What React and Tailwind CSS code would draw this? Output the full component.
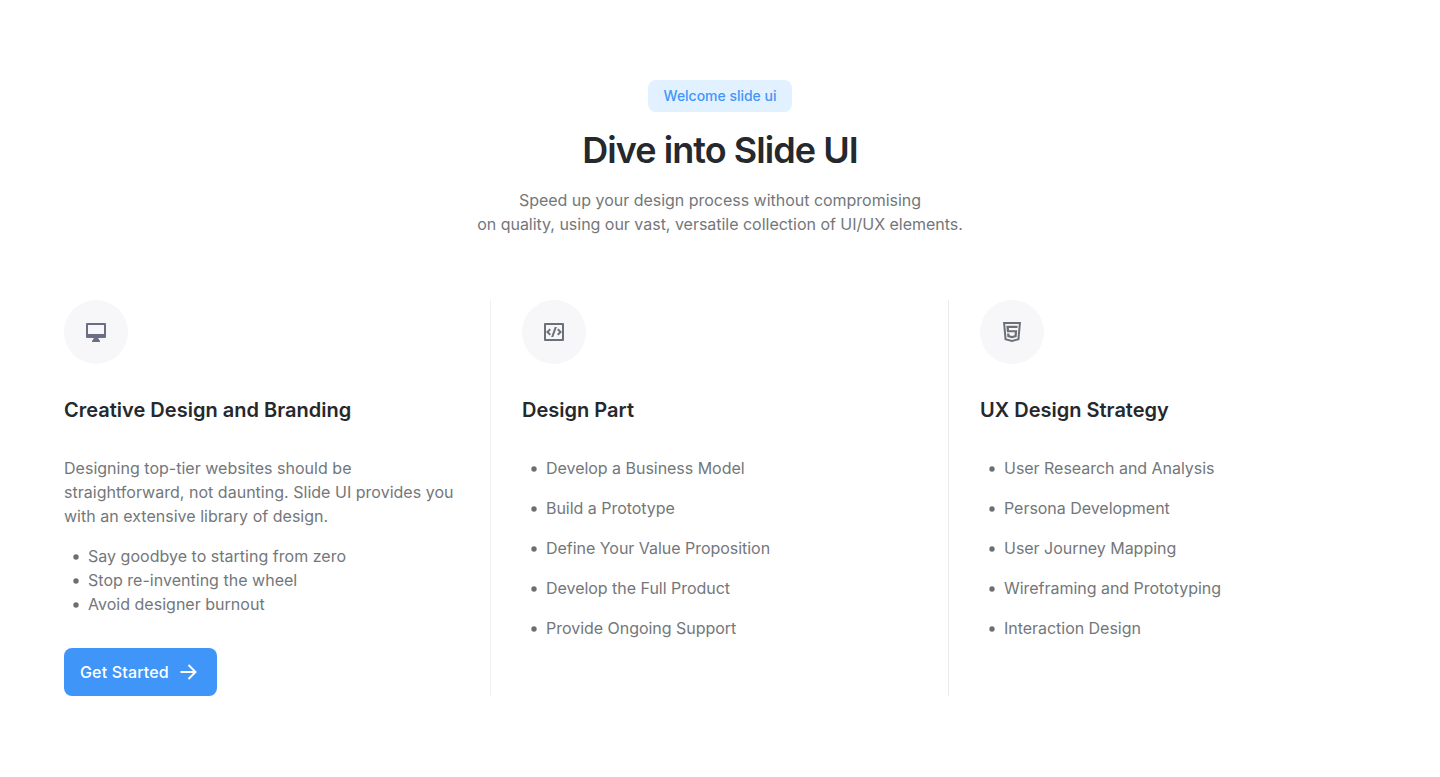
import React from 'react';

const designItems = [
  'Develop a Business Model',
  'Build a Prototype',
  'Define Your Value Proposition',
  'Develop the Full Product',
  'Provide Ongoing Support',
];
const uxItems = [
  'User Research and Analysis',
  'Persona Development',
  'User Journey Mapping',
  'Wireframing and Prototyping',
  'Interaction Design',
];

function DesktopIcon() {
  return (
    <svg className="size-6" viewBox="0 0 24 24" fill="currentColor">
      <path d="M4 5v9h16V5H4ZM3 3h18a1 1 0 0 1 1 1v13a1 1 0 0 1-1 1h-7l2 3v1H8v-1l2-3H3a1 1 0 0 1-1-1V4a1 1 0 0 1 1-1Z" />
    </svg>
  );
}

function CodeIcon() {
  return (
    <svg className="size-6" viewBox="0 0 24 24" fill="currentColor">
      <path d="M3 3h18a1 1 0 0 1 1 1v16a1 1 0 0 1-1 1H3a1 1 0 0 1-1-1V4a1 1 0 0 1 1-1Zm1 2v14h16V5H4Zm16 7-3.536 3.536-1.414-1.415L17.172 12 15.05 9.879l1.414-1.415L20 12ZM6.828 12l2.122 2.121-1.414 1.415L4 12l3.536-3.536L8.95 9.88 6.828 12Zm4.416 5H9.116l3.64-10h2.128l-3.64 10Z" />
    </svg>
  );
}

function Html5Icon() {
  return (
    <svg className="size-6" viewBox="0 0 24 24" fill="currentColor">
      <path d="m12 18.178-4.62-1.256-.328-3.544h2.27l.158 1.844 2.52.667 2.52-.667.26-2.866H6.96l-.635-6.678h11.35l-.227 2.21H8.822l.204 2.256h8.217l-.624 6.778L12 18.178ZM3 2h18l-1.623 18L12 22l-7.377-2L3 2Zm2.188 2 1.323 14.434L12 19.928l5.489-1.494L18.812 4H5.188Z" />
    </svg>
  );
}

function IconCircle({ children, tint }) {
  return (
    <div className={`flex size-16 items-center justify-center rounded-full bg-[#f7f7f9] ${tint}`}>{children}</div>
  );
}

function Bullets({ items, gap }) {
  return (
    <ul className={gap}>
      {items.map((item) => (
        <li key={item} className="flex items-center">
          <svg className="mt-0.5 mr-[9px] ml-[9px] size-1.5 shrink-0" viewBox="0 0 6 6" fill="#6c6f73">
            <circle cx="3" cy="3" r="2.7" />
          </svg>
          {item}
        </li>
      ))}
    </ul>
  );
}

function Column({ icon, title, children, className, tint = 'text-[#6c7079]' }) {
  return (
    <div className={className}>
      <IconCircle tint={tint}>{icon}</IconCircle>
      <h2 className="mt-8 mb-8 text-xl leading-7 font-semibold tracking-[0.01px] text-[#25282c]">{title}</h2>
      {children}
    </div>
  );
}

export default function App() {
  return (
    <main className="h-[777px] bg-white px-16 pt-20 font-['Inter',sans-serif] text-base leading-6 text-[#73777a]">
      <header className="flex flex-col items-center text-center">
        <span className="flex h-8 items-center rounded-lg bg-[#e2f1ff] px-4 text-sm font-medium tracking-[-0.02px] text-[#4396f8]">
          Welcome slide ui
        </span>
        <h1 className="mt-4 text-4xl leading-[44px] font-semibold tracking-[-0.95px] text-[#25282c]">
          Dive into Slide UI
        </h1>
        <p className="mt-4 tracking-[-0.02px]">
          Speed up your design process without compromising
          <br />
          on quality, using our vast, versatile collection of UI/UX elements.
        </p>
      </header>
      <section className="mt-16 grid h-[396px] grid-cols-[427px_458px_1fr]">
        <Column icon={<DesktopIcon />} tint="text-[#6b6d85]" title="Creative Design and Branding" className="border-r border-[#f0f0f2]">
          <p className="tracking-[0.02px]">
            Designing top-tier websites should be
            <br />
            straightforward, not daunting. Slide UI provides you
            <br />
            with an extensive library of design.
          </p>
          <div className="mt-4 tracking-[0.02px]">
            <Bullets
              items={['Say goodbye to starting from zero', 'Stop re-inventing the wheel', 'Avoid designer burnout']}
              gap="flex flex-col"
            />
          </div>
          <button className="mt-8 flex h-12 w-[153px] items-center gap-2 rounded-lg bg-[#4095f9] pl-4 font-medium tracking-[0.16px] text-white">
            Get Started
            <svg className="size-6" viewBox="0 0 24 24" fill="none" stroke="currentColor" strokeWidth="2">
              <path d="M3.5 12h15M11.5 5l7 7-7 7" />
            </svg>
          </button>
        </Column>
        <Column icon={<CodeIcon />} title="Design Part" className="border-r border-[#ebebee] pl-[31px] tracking-[-0.03px]">
          <Bullets items={designItems} gap="flex flex-col gap-4" />
        </Column>
        <Column icon={<Html5Icon />} title="UX Design Strategy" className="pl-[31px] tracking-[-0.03px]">
          <Bullets items={uxItems} gap="flex flex-col gap-4" />
        </Column>
      </section>
    </main>
  );
}
